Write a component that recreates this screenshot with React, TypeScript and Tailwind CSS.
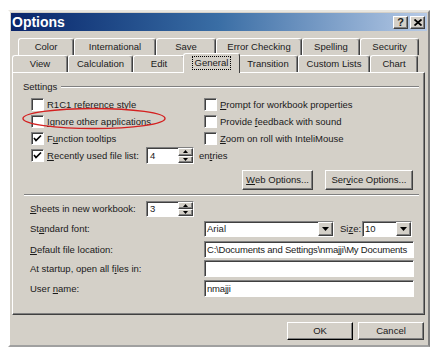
import React from "react";

const raised =
  "bg-[#d4d0c8] border border-t-white border-l-white border-r-[#404040] border-b-[#404040] shadow-[inset_-1px_-1px_#808080]";
const sunken =
  "bg-white border border-t-[#808080] border-l-[#808080] border-r-white border-b-white shadow-[inset_1px_1px_#404040]";

function U({ children }: { children: React.ReactNode }) {
  return <span className="underline underline-offset-[1px]">{children}</span>;
}

function Check({ checked }: { checked?: boolean }) {
  return (
    <div className={`w-[13px] h-[13px] shrink-0 flex items-center justify-center ${sunken}`}>
      {checked && (
        <svg width="9" height="9" viewBox="0 0 9 9">
          <path d="M1 4 L3 6.5 L8 1.5" stroke="#000" strokeWidth="1.7" fill="none" />
        </svg>
      )}
    </div>
  );
}

function CheckRow({ checked, children }: { checked?: boolean; children: React.ReactNode }) {
  return (
    <div className="flex items-center gap-[3px] h-[17px]">
      <Check checked={checked} />
      <span>{children}</span>
    </div>
  );
}

function Spin({ value, h }: { value: string; h: number }) {
  return (
    <div className={`flex w-[48px] ${h === 17 ? "h-[17px]" : "h-[16px]"} ${sunken}`}>
      <div className="flex-1 pl-[3px] flex items-center">{value}</div>
      <div className="w-[15px] flex flex-col">
        <div className={`flex-1 flex items-center justify-center ${raised}`}>
          <svg width="5" height="3" viewBox="0 0 5 3"><path d="M0 3 L2.5 0 L5 3 Z" fill="#000" /></svg>
        </div>
        <div className={`flex-1 flex items-center justify-center ${raised}`}>
          <svg width="5" height="3" viewBox="0 0 5 3"><path d="M0 0 L2.5 3 L5 0 Z" fill="#000" /></svg>
        </div>
      </div>
    </div>
  );
}

function Combo({ value, w }: { value: string; w: string }) {
  return (
    <div className={`flex h-[16px] ${w} ${sunken}`}>
      <div className="flex-1 pl-[2px] flex items-center">{value}</div>
      <div className={`w-[15px] flex items-center justify-center ${raised}`}>
        <svg width="7" height="4" viewBox="0 0 7 4"><path d="M0 0 L3.5 4 L7 0 Z" fill="#000" /></svg>
      </div>
    </div>
  );
}

function Field({ value }: { value?: string }) {
  return (
    <div className={`w-[210px] h-[17px] flex items-center pl-[2px] whitespace-nowrap overflow-hidden tracking-[-0.2px] ${sunken}`}>{value}</div>
  );
}

function Btn({ w, children, def }: { w: string; children: React.ReactNode; def?: boolean }) {
  return (
    <div
      className={`${w} flex items-center justify-center bg-[#d4d0c8] border border-t-white border-l-white ${
        def ? "border-r-[#000] border-b-[#000]" : "border-r-[#404040] border-b-[#404040]"
      } shadow-[inset_-1px_-1px_#808080]`}
    >
      {children}
    </div>
  );
}

function Tab({ w, label, selected }: { w: string; label: string; selected?: boolean }) {
  if (selected) {
    return (
      <div
        className={`relative z-10 ${w} -mx-[2px] -mt-[2px] h-[20px] -mb-[1px] bg-[#d4d0c8] border-t border-l border-r border-t-white border-l-white border-r-[#404040] rounded-t-[3px] flex items-start justify-center pt-[2px]`}
      >
        <span className="border border-dotted border-[#000] px-[2px] leading-[12px]">{label}</span>
      </div>
    );
  }
  return (
    <div
      className={`${w} h-[17px] bg-[#d4d0c8] border-t border-l border-r border-t-white border-l-white border-r-[#404040] rounded-t-[3px] flex items-center justify-center shadow-[inset_-1px_0_#808080]`}
    >
      {label}
    </div>
  );
}

export default function App() {
  return (
    <div className="relative w-[437px] h-[360px] bg-white pt-[10px] pl-[8px] font-['Liberation_Sans',Arial,sans-serif] text-[9.5px] text-[#1a1a1a] leading-none">
      <div className="w-[422px] h-[337px] bg-[#d4d0c8] border-2 border-t-[#e8e6e0] border-l-white border-r-[#808080] border-b-[#a0a0a0] flex flex-col">
        {/* Title bar */}
        <div className="mx-[1px] mt-[1px] h-[18px] bg-gradient-to-r from-[#0a246a] via-[#3a6ea5] to-[#b6cae6] flex items-center pl-[1px] pr-[2px]">
          <span className="text-white font-bold text-[14px] flex-1">Options</span>
          <div className="flex gap-[2px]">
            <div className={`w-[15px] h-[13px] flex items-center justify-center font-bold text-[11px] ${raised}`}>?</div>
            <div className={`w-[15px] h-[13px] flex items-center justify-center ${raised}`}>
              <svg width="8" height="7" viewBox="0 0 8 7">
                <path d="M0.5 0.5 L7.5 6.5 M7.5 0.5 L0.5 6.5" stroke="#000" strokeWidth="1.8" />
              </svg>
            </div>
          </div>
        </div>

        {/* Tabs + panel */}
        <div className="ml-[2px] w-[413px] mt-[7px] flex flex-col">
          <div className="flex ml-[6px]">
            <Tab w="w-[56px]" label="Color" />
            <Tab w="w-[82px]" label="International" />
            <Tab w="w-[60px]" label="Save" />
            <Tab w="w-[86px]" label="Error Checking" />
            <Tab w="w-[58px]" label="Spelling" />
            <Tab w="w-[59px]" label="Security" />
          </div>
          <div className="flex items-start h-[17px]">
            <Tab w="w-[56px]" label="View" />
            <Tab w="w-[65px]" label="Calculation" />
            <Tab w="w-[52px]" label="Edit" />
            <Tab w="w-[57px]" label="General" selected />
            <Tab w="w-[60px]" label="Transition" />
            <Tab w="w-[72px]" label="Custom Lists" />
            <Tab w="w-[48px]" label="Chart" />
          </div>

          {/* Panel */}
          <div className="h-[243px] border border-t-white border-l-white border-r-[#404040] border-b-[#404040] shadow-[inset_-1px_-1px_#808080] pt-[8px] pl-[10px] pr-[5px] flex flex-col">
            <div className="flex items-center h-[11px] gap-[4px]">
              <span>Settings</span>
              <div className="flex-1 h-[2px] border-t border-t-[#808080] border-b border-b-white" />
            </div>

            <div className="mt-[4px] pl-[8px] flex flex-col">
              <div className="flex">
                <div className="w-[173px]">
                  <CheckRow>R1<U>C</U>1 reference style</CheckRow>
                </div>
                <CheckRow><U>P</U>rompt for workbook properties</CheckRow>
              </div>
              <div className="flex">
                <div className="w-[173px]">
                  <CheckRow><U>I</U>gnore other applications</CheckRow>
                </div>
                <CheckRow>Provide <U>f</U>eedback with sound</CheckRow>
              </div>
              <div className="flex">
                <div className="w-[173px]">
                  <CheckRow checked>F<U>u</U>nction tooltips</CheckRow>
                </div>
                <CheckRow><U>Z</U>oom on roll with InteliMouse</CheckRow>
              </div>
              <div className="flex items-center h-[17px]">
                <div className="w-[115px]">
                  <CheckRow checked><U>R</U>ecently used file list:</CheckRow>
                </div>
                <Spin value="4" h={17} />
                <span className="ml-[5px]">en<U>t</U>ries</span>
              </div>
            </div>

            <div className="mt-[6px] flex justify-end gap-[12px] mr-[6px]">
              <Btn w="w-[71px] h-[20px]"><U>W</U>eb Options...</Btn>
              <Btn w="w-[88px] h-[20px]">Ser<U>v</U>ice Options...</Btn>
            </div>

            <div className="mt-[4px] ml-[1px] h-[2px] border-t border-t-[#808080] border-b border-b-white" />

            <div className="pl-[7px] flex flex-col">
              <div className="mt-[5px] flex items-center h-[16px]">
                <span className="w-[116px]"><U>S</U>heets in new workbook:</span>
                <Spin value="3" h={16} />
              </div>
              <div className="mt-[4px] flex items-center h-[16px]">
                <span className="w-[174px]">St<U>a</U>ndard font:</span>
                <Combo value="Arial" w="w-[130px]" />
                <span className="ml-[6px] w-[22px]">Si<U>z</U>e:</span>
                <Combo value="10" w="w-[50px]" />
              </div>
              <div className="mt-[4px] flex items-center h-[17px]">
                <span className="w-[174px]"><U>D</U>efault file location:</span>
                <Field value={"C:\\Documents and Settings\\nmajji\\My Documents"} />
              </div>
              <div className="mt-[2px] flex items-center h-[17px]">
                <span className="w-[174px]">At startup, open all f<U>i</U>les in:</span>
                <Field />
              </div>
              <div className="mt-[3px] flex items-center h-[17px]">
                <span className="w-[174px]">User <U>n</U>ame:</span>
                <Field value="nmajji" />
              </div>
            </div>
          </div>
        </div>

        {/* Bottom buttons */}
        <div className="mt-[7px] flex justify-end gap-[5px] mr-[4px]">
          <Btn w="w-[66px] h-[18px]" def>OK</Btn>
          <Btn w="w-[66px] h-[18px]">Cancel</Btn>
        </div>
      </div>

      {/* Red annotation ellipse */}
      <svg className="absolute left-[21px] top-[107px]" width="146" height="23" viewBox="0 0 146 23">
        <ellipse cx="73" cy="11.5" rx="71" ry="10" fill="none" stroke="#d42020" strokeWidth="1.4" />
      </svg>
    </div>
  );
}
